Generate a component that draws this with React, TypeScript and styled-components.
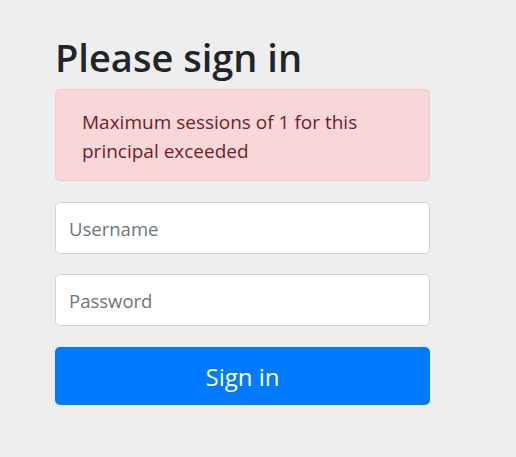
import React from "react";
import styled, { createGlobalStyle } from "styled-components";

const GlobalStyle = createGlobalStyle`
  html, body {
    margin: 0;
    padding: 0;
    background: #eeeeee;
  }
  body {
    font-family: "Open Sans", "Noto Sans", sans-serif;
    color: #212529;
  }
`;

const Page = styled.div`
  padding: 34px 0 40px 55px;
`;

const Form = styled.form`
  width: 375px;
  display: flex;
  flex-direction: column;
`;

const Heading = styled.h2`
  margin: 0 0 9px;
  font-size: 38px;
  font-weight: 600;
  line-height: 46px;
  color: #212529;
`;

const Alert = styled.div`
  background: #f8d7da;
  border: 1px solid #f5c6cb;
  border-radius: 5px;
  color: #721c24;
  padding: 18px 26px 14px;
  font-size: 19px;
  line-height: 29px;
  margin-bottom: 21px;
`;

const Input = styled.input<{ $gap: number }>`
  box-sizing: border-box;
  height: 52px;
  width: 100%;
  padding: 1px 13px 0;
  border: 1px solid #ced4da;
  border-radius: 5px;
  background: #fff;
  font-family: inherit;
  font-size: 18.5px;
  color: #495057;
  margin-bottom: ${(p) => p.$gap}px;

  &::placeholder {
    color: #6c757d;
  }
`;

const Button = styled.button`
  height: 58px;
  width: 100%;
  border: none;
  border-radius: 5px;
  background: #007bff;
  color: #fff;
  font-family: inherit;
  font-size: 24px;
  cursor: pointer;
`;

export default function App() {
  return (
    <>
      <GlobalStyle />
      <Page>
        <Form onSubmit={(e) => e.preventDefault()}>
          <Heading>Please sign in</Heading>
          <Alert>Maximum sessions of 1 for this principal exceeded</Alert>
          <Input $gap={20} type="text" placeholder="Username" />
          <Input $gap={21} type="password" placeholder="Password" />
          <Button type="submit">Sign in</Button>
        </Form>
      </Page>
    </>
  );
}
